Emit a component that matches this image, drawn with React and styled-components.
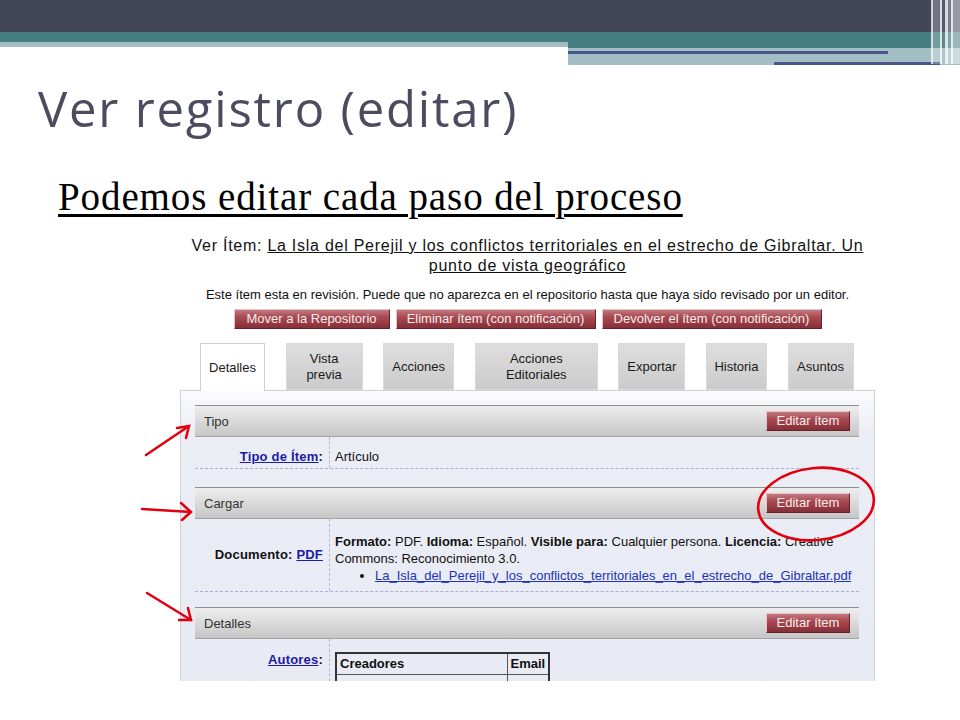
import React from "react";
import styled, { createGlobalStyle } from "styled-components";

const Global = createGlobalStyle`
  html, body { margin: 0; padding: 0; background: #fff; }
  body { width: 960px; height: 720px; overflow: hidden; }
  * { box-sizing: border-box; }
`;

const Slide = styled.div`
  position: relative;
  width: 960px;
  height: 720px;
  overflow: hidden;
  background: #fff;
  display: flex;
  flex-direction: column;
`;

/* ---------- header stripes ---------- */
const Header = styled.header`
  position: relative;
  height: 65px;
  flex: none;
  display: flex;
  flex-direction: column;
`;
const DarkBand = styled.div`
  height: 32px;
  background: #434558;
`;
const BandRow = styled.div`
  flex: 1;
  display: flex;
`;
const LeftBands = styled.div`
  width: 568px;
  display: flex;
  flex-direction: column;
`;
const RightBands = styled.div`
  flex: 1;
  display: flex;
  flex-direction: column;
`;
const Band = styled.div`
  height: ${(p) => p.$h}px;
  background: ${(p) => p.$c};
`;
const LightBlock = styled.div`
  flex: 1;
  background: #a3bec4;
  padding-top: 3px;
  display: flex;
  flex-direction: column;
  gap: 8px;
`;
const NavyLine = styled.div`
  height: 3px;
  margin-left: ${(p) => p.$ml}px;
  width: ${(p) => p.$w}px;
  background: #4b5587;
`;
const Stripes = styled.div`
  position: absolute;
  top: 0;
  right: 0;
  width: 29px;
  height: 64px;
  background: linear-gradient(
    to right,
    rgba(255, 255, 255, 0.75) 0 2px,
    rgba(255, 255, 255, 0.25) 2px 9px,
    rgba(255, 255, 255, 0.8) 9px 11px,
    rgba(255, 255, 255, 0.1) 11px 14px,
    rgba(255, 255, 255, 0.8) 14px 17px,
    rgba(255, 255, 255, 0.3) 17px 20px,
    rgba(255, 255, 255, 0.85) 20px 22px,
    rgba(255, 255, 255, 0.45) 22px 29px
  );
`;

/* ---------- slide text ---------- */
const Title = styled.h1`
  margin: 19px 0 0 38px;
  font-family: "Open Sans", "DejaVu Sans", sans-serif;
  font-weight: 400;
  font-size: 49px;
  line-height: 49px;
  letter-spacing: 1.8px;
  color: #4b4c5f;
`;
const Subtitle = styled.h2`
  margin: 44px 0 0 58px;
  font-family: "Liberation Serif", "Times New Roman", serif;
  font-weight: 400;
  font-size: 39px;
  line-height: 39px;
  letter-spacing: 0.9px;
  color: #000;
  text-decoration: underline;
  text-decoration-thickness: 3px;
  text-underline-offset: 4px;
`;

/* ---------- embedded screenshot ---------- */
const Shot = styled.section`
  margin: 15px 0 0 180px;
  width: 695px;
  height: 450px;
  overflow: hidden;
  font-family: "Liberation Sans", Arial, sans-serif;
  color: #111;
  display: flex;
  flex-direction: column;
`;
const ItemHeading = styled.div`
  text-align: center;
  font-size: 16px;
  letter-spacing: 0.74px;
  line-height: 20px;
  padding-top: 5px;
`;
const HeadingLink = styled.span`
  text-decoration: underline;
`;
const Notice = styled.div`
  margin-top: 11px;
  text-align: center;
  font-size: 13px;
  line-height: 16px;
`;
const ButtonRow = styled.div`
  margin-top: 6px;
  display: flex;
  justify-content: center;
  gap: 6px;
`;
const RedButton = styled.button`
  height: 20px;
  padding: 0 ${(p) => p.$px ?? 8}px;
  width: ${(p) => (p.$w ? `${p.$w}px` : "auto")};
  font-family: "Liberation Sans", Arial, sans-serif;
  font-size: 13px;
  line-height: 18px;
  color: #f6ecec;
  border: 1px solid;
  border-color: #e6c3c5 #6a1f26 #6a1f26 #e6c3c5;
  background: linear-gradient(#c27a80 0%, #aa4d55 35%, #983b43 70%, #84303a 100%);
  white-space: nowrap;
  cursor: pointer;
`;

const TabBar = styled.div`
  margin-top: 14px;
  padding-left: 20px;
  display: flex;
  gap: 20.6px;
  align-items: flex-end;
  position: relative;
  z-index: 1;
`;
const Tab = styled.div`
  width: ${(p) => p.$w}px;
  height: ${(p) => (p.$active ? 48 : 47)}px;
  margin-bottom: ${(p) => (p.$active ? -1 : 0)}px;
  display: flex;
  align-items: center;
  justify-content: center;
  text-align: center;
  font-size: 13px;
  line-height: 16px;
  color: #1a1a1a;
  border: 1px solid ${(p) => (p.$active ? "#cfcfcf" : "#d9d9d9")};
  border-bottom: ${(p) => (p.$active ? "none" : "1px solid #d9d9d9")};
  background: ${(p) =>
    p.$active ? "#ffffff" : "linear-gradient(#dedede, #cbcbcb)"};
`;

const Panel = styled.div`
  flex: 1;
  border: 1px solid #cfd0d8;
  border-bottom: none;
  background: linear-gradient(#fbfbfd 0px, #eceef6 40px, #e8eaf4 100%);
  padding: 14px 15px 0 14px;
  display: flex;
  flex-direction: column;
`;
const Section = styled.div`
  margin-bottom: ${(p) => p.$gap ?? 0}px;
`;
const SectionBar = styled.div`
  height: 32px;
  display: flex;
  align-items: center;
  justify-content: space-between;
  padding: 0 9px;
  border-top: 1px solid #8f8f8f;
  border-bottom: 1px solid #a3a3a3;
  background: linear-gradient(#eeeeee, #dadada 50%, #c6c6c6);
  font-size: 13px;
  color: #333;
`;
const Row = styled.div`
  display: grid;
  grid-template-columns: 134px 1fr;
  border-bottom: ${(p) => (p.$last ? "none" : "1px dashed #a9aed2")};
`;
const Label = styled.div`
  padding: ${(p) => p.$pad};
  padding-right: 6px;
  text-align: right;
  align-self: ${(p) => p.$align ?? "start"};
  font-size: 13px;
  letter-spacing: 0.2px;
  line-height: 16px;
  font-weight: 700;
  color: #111;
`;
const Value = styled.div`
  padding: ${(p) => p.$pad};
  padding-left: 5px;
  border-left: 1px dashed #b4b8d6;
  font-size: 13px;
  line-height: ${(p) => p.$lh ?? 16}px;
  white-space: nowrap;
`;
const Link = styled.a`
  color: ${(p) => p.$c ?? "#1b1ba6"};
  text-decoration: underline;
`;
const Files = styled.ul`
  margin: 0;
  padding-left: 40px;
  list-style: disc;
`;
const AuthorTable = styled.table`
  border-collapse: collapse;
  border: 2px solid #333;
  font-size: 13px;
`;
const Th = styled.th`
  border: 1px solid #555;
  padding: 2px 3px;
  height: 20px;
  text-align: left;
  font-weight: 700;
  width: ${(p) => p.$w}px;
`;
const Td = styled.td`
  border: 1px solid #555;
  height: 20px;
`;

const Annotations = styled.svg`
  position: absolute;
  left: 0;
  top: 0;
  width: 960px;
  height: 720px;
  pointer-events: none;
`;

const tabs = [
  { t: "Detalles", w: 65, active: true },
  { t: ["Vista", "previa"], w: 77 },
  { t: "Acciones", w: 71 },
  { t: ["Acciones", "Editoriales"], w: 123 },
  { t: "Exportar", w: 67 },
  { t: "Historia", w: 61 },
  { t: "Asuntos", w: 66 },
];

function Arrow({ x1, y1, x2, y2, h1, h2 }) {
  return (
    <g stroke="#e2000e" strokeWidth="2.5" fill="none" strokeLinecap="round">
      <line x1={x1} y1={y1} x2={x2} y2={y2} />
      <polyline points={`${h1[0]},${h1[1]} ${x2},${y2} ${h2[0]},${h2[1]}`} />
    </g>
  );
}

export default function App() {
  return (
    <Slide>
      <Global />
      <Header>
        <DarkBand />
        <BandRow>
          <LeftBands>
            <Band $h={10} $c="#457e80" />
            <Band $h={5} $c="#a2bdc3" />
          </LeftBands>
          <RightBands>
            <Band $h={16} $c="#457e80" />
            <LightBlock>
              <NavyLine $ml={0} $w={320} />
              <NavyLine $ml={206} $w={166} />
            </LightBlock>
          </RightBands>
        </BandRow>
        <Stripes />
      </Header>

      <Title>Ver registro (editar)</Title>
      <Subtitle>Podemos editar cada paso del proceso</Subtitle>

      <Shot>
        <ItemHeading>
          Ver Ítem:{" "}
          <HeadingLink>
            La Isla del Perejil y los conflictos territoriales en el estrecho de
            Gibraltar. Un punto de vista geográfico
          </HeadingLink>
        </ItemHeading>
        <Notice>
          Este ítem esta en revisión. Puede que no aparezca en el repositorio
          hasta que haya sido revisado por un editor.
        </Notice>
        <ButtonRow>
          <RedButton $w={156}>Mover a la Repositorio</RedButton>
          <RedButton $w={200}>Eliminar ítem (con notificación)</RedButton>
          <RedButton $w={220}>Devolver el ítem (con notificación)</RedButton>
        </ButtonRow>

        <TabBar>
          {tabs.map((tab, i) => (
            <Tab key={i} $w={tab.w} $active={tab.active}>
              {Array.isArray(tab.t) ? (
                <span>
                  {tab.t[0]}
                  <br />
                  {tab.t[1]}
                </span>
              ) : (
                tab.t
              )}
            </Tab>
          ))}
        </TabBar>

        <Panel>
          <Section $gap={18}>
            <SectionBar>
              Tipo
              <RedButton $w={84} $px={0}>Editar ítem</RedButton>
            </SectionBar>
            <Row>
              <Label $pad="12px 0 3px">
                <Link>Tipo de Ítem</Link>:
              </Label>
              <Value $pad="12px 0 3px">Artículo</Value>
            </Row>
          </Section>

          <Section $gap={15}>
            <SectionBar>
              Cargar
              <RedButton $w={84} $px={0}>Editar ítem</RedButton>
            </SectionBar>
            <Row>
              <Label $pad="0" $align="center">
                Documento: <Link>PDF</Link>
              </Label>
              <Value $pad="14px 0 7px" $lh={17}>
                <b>Formato:</b> PDF. <b>Idioma:</b> Español. <b>Visible para:</b>{" "}
                Cualquier persona. <b>Licencia:</b> Creative
                <br />
                Commons: Reconocimiento 3.0.
                <Files>
                  <li>
                    <Link $c="#2132b8">
                      La_Isla_del_Perejil_y_los_conflictos_territoriales_en_el_estrecho_de_Gibraltar.pdf
                    </Link>
                  </li>
                </Files>
              </Value>
            </Row>
          </Section>

          <Section>
            <SectionBar>
              Detalles
              <RedButton $w={84} $px={0}>Editar ítem</RedButton>
            </SectionBar>
            <Row $last>
              <Label $pad="13px 0 4px">
                <Link>Autores</Link>:
              </Label>
              <Value $pad="13px 0 0">
                <AuthorTable>
                  <thead>
                    <tr>
                      <Th $w={171}>Creadores</Th>
                      <Th $w={42}>Email</Th>
                    </tr>
                  </thead>
                  <tbody>
                    <tr>
                      <Td />
                      <Td />
                    </tr>
                  </tbody>
                </AuthorTable>
              </Value>
            </Row>
          </Section>
        </Panel>
      </Shot>

      <Annotations viewBox="0 0 960 720">
        <Arrow x1={146} y1={455} x2={189} y2={426} h1={[177, 428]} h2={[186, 438]} />
        <Arrow x1={142} y1={509} x2={191} y2={512} h1={[181, 503]} h2={[182, 520]} />
        <Arrow x1={147} y1={593} x2={191} y2={620} h1={[179, 620]} h2={[188, 608]} />
        <ellipse
          cx="816"
          cy="504"
          rx="58"
          ry="36"
          transform="rotate(-6 816 504)"
          fill="none"
          stroke="#e2000e"
          strokeWidth="2.6"
        />
      </Annotations>
    </Slide>
  );
}
